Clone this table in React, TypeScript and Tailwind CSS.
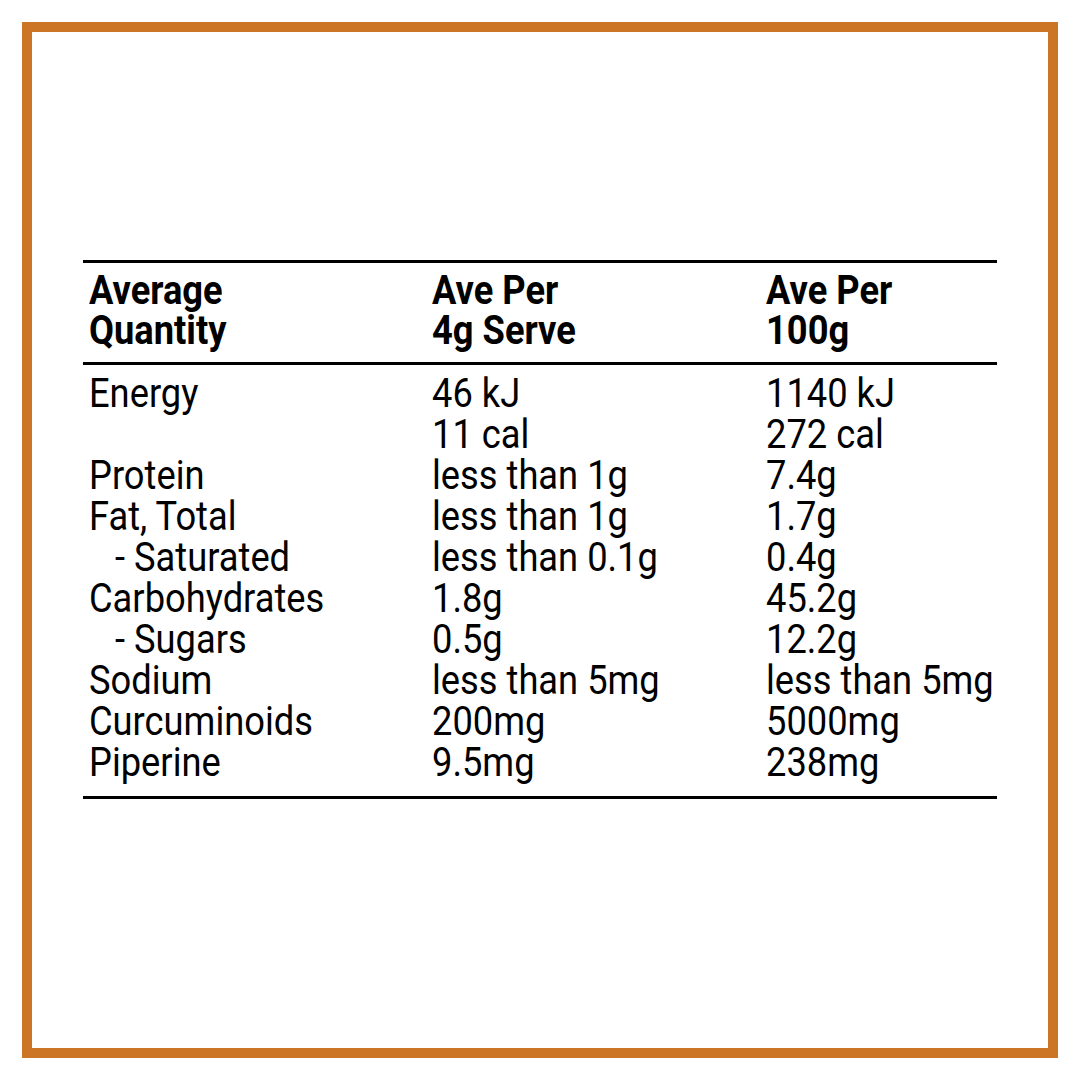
import React from "react";

const rows: [string, string, string, boolean?][] = [
  ["Energy", "46 kJ", "1140 kJ"],
  ["", "11 cal", "272 cal"],
  ["Protein", "less than 1g", "7.4g"],
  ["Fat, Total", "less than 1g", "1.7g"],
  ["- Saturated", "less than 0.1g", "0.4g", true],
  ["Carbohydrates", "1.8g", "45.2g"],
  ["- Sugars", "0.5g", "12.2g", true],
  ["Sodium", "less than 5mg", "less than 5mg"],
  ["Curcuminoids", "200mg", "5000mg"],
  ["Piperine", "9.5mg", "238mg"],
];

function C({ children, className = "" }: { children: React.ReactNode; className?: string }) {
  return (
    <div className={className}>
      <span className="inline-block origin-left scale-x-[0.885] whitespace-nowrap">{children}</span>
    </div>
  );
}

export default function App() {
  return (
    <div className="w-[1080px] h-[1080px] bg-white p-[22px]" style={{ fontFamily: "Roboto, 'Liberation Sans', sans-serif" }}>
      <div className="w-full h-full border-[10px] border-[#cc7526] pl-[51px] pt-[228px]">
        <div className="w-[914px] text-black text-[41px]">
          <div className="h-[3px] bg-black" />
          <div className="grid grid-cols-[343px_334px_1fr] pl-[6px] pt-[7px] pb-[12px] font-bold leading-[40px]">
            <C>Average<br />Quantity</C>
            <C>Ave Per<br />4g Serve</C>
            <C>Ave Per<br />100g</C>
          </div>
          <div className="h-[3px] bg-black" />
          <div className="pt-[8px] pb-[13px] pl-[6px] leading-[41px]">
            {rows.map(([a, b, c, ind], i) => (
              <div key={i} className="grid grid-cols-[343px_334px_1fr] h-[41px]">
                <C className={ind ? "pl-[26px]" : ""}>{a}</C>
                <C>{b}</C>
                <C>{c}</C>
              </div>
            ))}
          </div>
          <div className="h-[3px] bg-black" />
        </div>
      </div>
    </div>
  );
}
